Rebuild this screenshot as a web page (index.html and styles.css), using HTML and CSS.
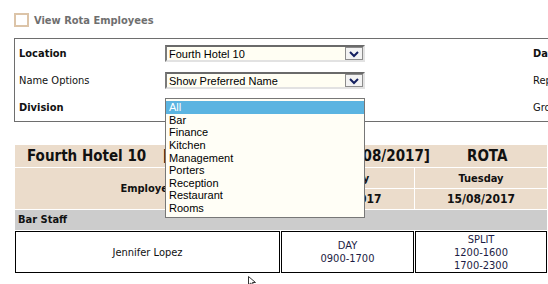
FILE: index.html
```html
<!DOCTYPE html>
<html>
<head>
<meta charset="utf-8">
<link rel="stylesheet" href="styles.css">
</head>
<body>
<div class="page">
  <div class="toggle">
    <span class="checkbox"></span>
    <span class="toggle-label">View Rota Employees</span>
  </div>

  <div class="filters">
    <div class="lbl b">Location</div>
    <div class="select"><span>Fourth Hotel 10</span><span class="arrow"><svg width="12" height="8" viewBox="0 0 12 8"><path d="M2 2 L6 6 L10 2" fill="none" stroke="#142060" stroke-width="2"/></svg></span></div>
    <div></div>
    <div class="lbl b">Date</div>

    <div class="lbl">Name Options</div>
    <div class="select"><span>Show Preferred Name</span><span class="arrow"><svg width="12" height="8" viewBox="0 0 12 8"><path d="M2 2 L6 6 L10 2" fill="none" stroke="#142060" stroke-width="2"/></svg></span></div>
    <div></div>
    <div class="lbl">Report Type</div>

    <div class="lbl b">Division</div>
    <div class="drop-cell">
      <ul class="listbox">
        <li class="sel">All</li>
        <li>Bar</li>
        <li>Finance</li>
        <li>Kitchen</li>
        <li>Management</li>
        <li>Porters</li>
        <li>Reception</li>
        <li>Restaurant</li>
        <li>Rooms</li>
      </ul>
    </div>
    <div></div>
    <div class="lbl">Group By</div>
  </div>

  <div class="rota-head">
    <div class="title">
      <span class="t-name">Fourth Hotel 10</span>
      <span class="t-date">[14/08/2017 - 15/08/2017]</span>
      <span class="t-rota">ROTA</span>
    </div>
    <div class="h-emp">Employee</div>
    <div class="h-day">Monday</div>
    <div class="h-day">Tuesday</div>
    <div class="h-date">14/08/2017</div>
    <div class="h-date">15/08/2017</div>
  </div>

  <div class="group">Bar Staff</div>

  <div class="rota-row">
    <div class="cell name">Jennifer Lopez</div>
    <div class="cell shift"><span>DAY</span><span>0900-1700</span></div>
    <div class="cell shift"><span>SPLIT</span><span>1200-1600</span><span>1700-2300</span></div>
  </div>

  <svg class="cursor" width="10" height="12" viewBox="0 0 10 12"><path d="M0.5 0.5 L0.5 9 L2.8 7 L4.5 11 L6 10.3 L4.4 6.5 L7.5 6.5 Z" fill="#fff" stroke="#333" stroke-width="1"/></svg>
</div>
</body>
</html>
```

FILE: styles.css
```css
html, body {
  margin: 0;
  padding: 0;
  background: #fff;
  overflow: hidden;
}

.page {
  position: relative;
  width: 548px;
  height: 284px;
  overflow: hidden;
  font-family: "DejaVu Sans Condensed", "DejaVu Sans", sans-serif;
  font-stretch: condensed;
  font-size: 11px;
  color: #111;
}

.toggle {
  display: flex;
  align-items: center;
  padding: 13px 0 0 14px;
  height: 14px;
  margin-bottom: 11px;
}

.checkbox {
  width: 15px;
  height: 14px;
  box-sizing: border-box;
  border: 2px solid #dcc4a8;
  background: #fff;
}

.toggle-label {
  margin-left: 5px;
  font-weight: bold;
  color: #6f6f6f;
}

.filters {
  margin-left: 14px;
  width: 600px;
  border: 1px solid #6e6e6e;
  padding-top: 1px;
  display: grid;
  grid-template-columns: 150px 200px 168px 100px;
  grid-auto-rows: 27px;
  align-items: center;
}

.lbl {
  padding-left: 4px;
  white-space: nowrap;
}

.lbl.b {
  font-weight: bold;
}

.filters > .lbl:nth-child(4n) {
  padding-left: 0;
}

.select {
  height: 17px;
  box-sizing: border-box;
  border-style: solid;
  border-width: 2px;
  border-color: #6a6a6a #e2e2e2 #e2e2e2 #7a7a7a;
  background: #fffef3;
  display: flex;
  align-items: center;
  justify-content: space-between;
  font-family: "Liberation Sans", Arial, sans-serif;
  font-stretch: normal;
  font-size: 11px;
  color: #000;
  padding-left: 2px;
}

.arrow {
  width: 18px;
  height: 13px;
  box-sizing: border-box;
  border: 1px solid #8c8c8c;
  background: #f3f3f3;
  display: flex;
  align-items: center;
  justify-content: center;
}

.drop-cell {
  position: relative;
  height: 27px;
}

.listbox {
  position: absolute;
  top: 4px;
  left: 0;
  width: 200px;
  box-sizing: border-box;
  margin: 0;
  padding: 2px 0 2px;
  list-style: none;
  border: 1px solid #777;
  background: #fffef6;
  font-family: "Liberation Sans", Arial, sans-serif;
  font-stretch: normal;
  font-size: 11px;
  line-height: 12.65px;
  color: #000;
  z-index: 5;
}

.listbox li {
  padding-left: 3px;
  height: 12.65px;
}

.listbox li.sel {
  background: #5bb4e1;
  color: #fff;
}

.rota-head {
  margin: 23px 0 0 15px;
  width: 532px;
  display: grid;
  grid-template-columns: 265px 133px 132px;
  grid-template-rows: 22px 20px 20px;
  gap: 1px;
  background: #fff;
  font-weight: bold;
}

.rota-head > div {
  background: #ebdccb;
  display: flex;
  align-items: center;
  justify-content: center;
}

.rota-head > .title {
  grid-column: 1 / -1;
  justify-content: flex-start;
  padding-left: 12px;
  font-size: 15px;
  white-space: nowrap;
}

.t-name {
  flex: none;
  width: 136px;
}

.t-date {
  flex: none;
  width: 267px;
  text-align: justify;
  text-align-last: justify;
}

.t-rota {
  margin-left: 37px;
}

.h-emp {
  grid-row: 2 / 4;
}

.h-date {
  font-size: 12px;
}

.group {
  margin: 1px 0 0 15px;
  width: 532px;
  height: 20px;
  box-sizing: border-box;
  padding-left: 3px;
  line-height: 20px;
  background: #cccccc;
  font-weight: bold;
}

.rota-row {
  margin: 1px 0 0 15px;
  width: 532px;
  display: grid;
  grid-template-columns: 265px 133px 132px;
  gap: 1px;
}

.cell {
  height: 42px;
  box-sizing: border-box;
  border: 1px solid #000;
  display: flex;
  flex-direction: column;
  align-items: center;
  justify-content: center;
  line-height: 13px;
}

.shift {
  color: #1c1c44;
}

.cursor {
  position: absolute;
  left: 248px;
  top: 276px;
}
```
